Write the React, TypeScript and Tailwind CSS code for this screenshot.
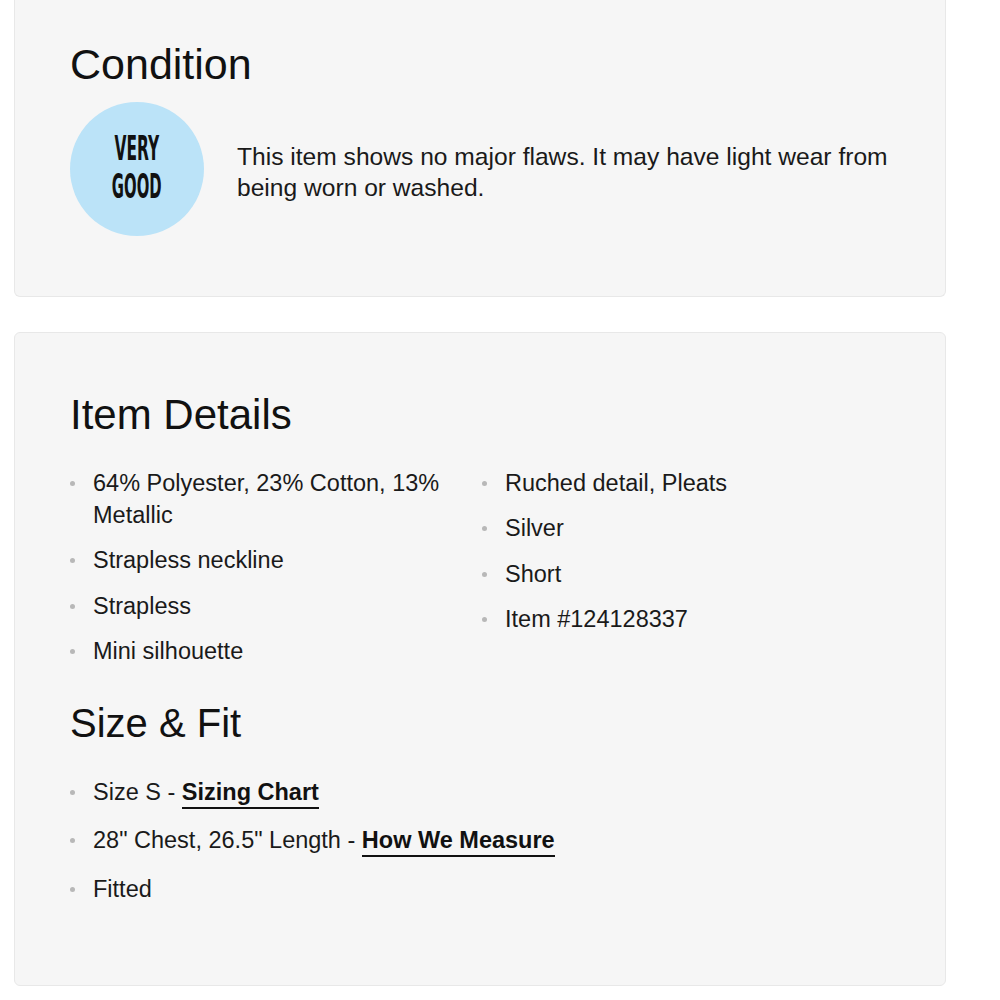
const details = {
  left: ["64% Polyester, 23% Cotton, 13% Metallic", "Strapless neckline", "Strapless", "Mini silhouette"],
  right: ["Ruched detail, Pleats", "Silver", "Short", "Item #124128337"],
}

function Dot() {
  return <span className="mt-[14px] h-[5px] w-[5px] shrink-0 rounded-full bg-[#b8b8b8]" />
}

function Bullet({ children }: { children: React.ReactNode }) {
  return (
    <li className="flex gap-[18px]">
      <Dot />
      <span>{children}</span>
    </li>
  )
}

function Link({ children }: { children: React.ReactNode }) {
  return <span className="border-b-2 border-[#111] pb-[2px] font-bold text-[#111]">{children}</span>
}

export default function App() {
  return (
    <div className="min-h-screen bg-white">
      <div className="ml-[14px] w-[932px] font-['Liberation_Sans',Arial,sans-serif] text-[#1a1a1a]">
        <section className="h-[297px] rounded-b-md border-x border-b border-[#e8e8e8] bg-[#f6f6f6] px-[55px] pt-[40px]">
          <h2 className="text-[43px] leading-[48px] text-[#111]">Condition</h2>
          <div className="mt-[14px] flex items-center gap-[33px]">
            <div className="flex h-[134px] w-[134px] shrink-0 flex-col items-center justify-center rounded-full bg-[#bbe3f8] pb-[2px] font-['DejaVu_Sans_Condensed','Liberation_Sans',sans-serif] text-[#111]">
              <span className="block h-[38px] scale-x-[0.52] text-[33px] font-bold leading-[38px]">VERY</span>
              <span className="block h-[38px] scale-x-[0.5] text-[33px] font-bold leading-[38px]">GOOD</span>
            </div>
            <p className="mt-[6px] text-[24.6px] leading-[31px]">
              This item shows no major flaws. It may have light wear from being worn or washed.
            </p>
          </div>
        </section>

        <section className="mt-[35px] rounded-md border border-[#e8e8e8] bg-[#f6f6f6] px-[55px] pb-[80px] pt-[58px]">
          <h2 className="text-[42px] leading-[48px] text-[#111]">Item Details</h2>
          <div className="mt-[28px] grid grid-cols-2 text-[23.5px] leading-[32px]">
            <ul className="flex flex-col gap-[13.3px] pr-[20px]">
              {details.left.map((d) => (
                <Bullet key={d}>{d}</Bullet>
              ))}
            </ul>
            <ul className="flex flex-col gap-[13.3px] pl-[2px]">
              {details.right.map((d) => (
                <Bullet key={d}>{d}</Bullet>
              ))}
            </ul>
          </div>

          <h2 className="mt-[32px] text-[40px] leading-[48px] text-[#111]">Size &amp; Fit</h2>
          <ul className="mt-[29px] flex flex-col gap-[16.5px] text-[23.5px] leading-[32px]">
            <Bullet>
              Size S - <Link>Sizing Chart</Link>
            </Bullet>
            <Bullet>
              28" Chest, 26.5" Length - <Link>How We Measure</Link>
            </Bullet>
            <Bullet>Fitted</Bullet>
          </ul>
        </section>
      </div>
    </div>
  )
}
